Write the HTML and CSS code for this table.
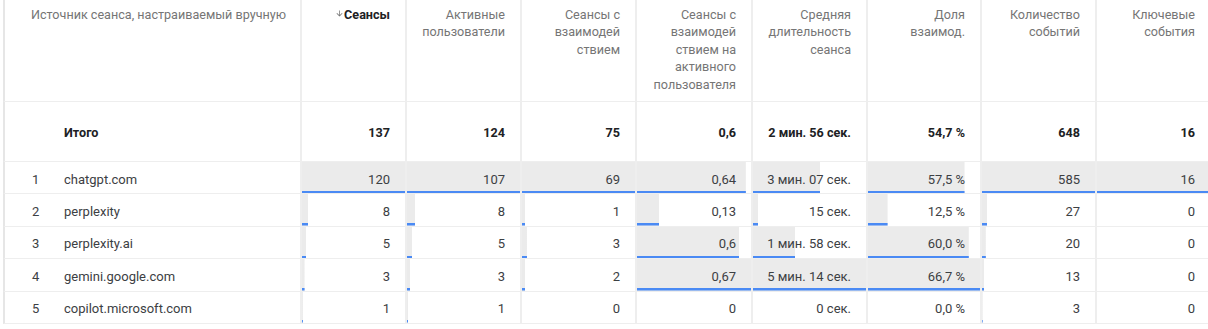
FILE: index.html
```html
<!DOCTYPE html>
<html lang="ru">
<head>
<meta charset="utf-8">
<title>Источники сеансов</title>
<link rel="stylesheet" href="styles.css">
</head>
<body>
<div class="table">
  <div class="row head">
    <div class="c first">Источник сеанса, настраиваемый вручную</div>
    <div class="c sorted"><svg class="arrow" viewBox="0 0 24 24" width="9" height="9"><path d="M20 12l-1.41-1.41L13 16.17V4h-2v12.17l-5.58-5.59L4 12l8 8 8-8z"/></svg>Сеансы</div>
    <div class="c">Активные<br>пользователи</div>
    <div class="c">Сеансы с<br>взаимодей<br>ствием</div>
    <div class="c">Сеансы с<br>взаимодей<br>ствием на<br>активного<br>пользователя</div>
    <div class="c">Средняя<br>длительность<br>сеанса</div>
    <div class="c">Доля<br>взаимод.</div>
    <div class="c">Количество<br>событий</div>
    <div class="c">Ключевые<br>события</div>
  </div>
  <div class="row total">
    <div class="c first"><span class="idx"></span><span class="name">Итого</span></div>
    <div class="c">137</div>
    <div class="c">124</div>
    <div class="c">75</div>
    <div class="c">0,6</div>
    <div class="c">2 мин. 56 сек.</div>
    <div class="c">54,7&nbsp;%</div>
    <div class="c">648</div>
    <div class="c">16</div>
  </div>
  <div class="row data">
    <div class="c first"><span class="idx">1</span><span class="name">chatgpt.com</span></div>
    <div class="c bar" style="--w:100%">120</div>
    <div class="c bar" style="--w:100%">107</div>
    <div class="c bar" style="--w:100%">69</div>
    <div class="c bar" style="--w:95.5%">0,64</div>
    <div class="c bar" style="--w:59.6%">3 мин. 07 сек.</div>
    <div class="c bar" style="--w:86.2%">57,5&nbsp;%</div>
    <div class="c bar" style="--w:100%">585</div>
    <div class="c bar" style="--w:100%">16</div>
  </div>
  <div class="row data">
    <div class="c first"><span class="idx">2</span><span class="name">perplexity</span></div>
    <div class="c bar" style="--w:6.2%">8</div>
    <div class="c bar" style="--w:7.5%">8</div>
    <div class="c bar" style="--w:3%">1</div>
    <div class="c bar" style="--w:19.4%">0,13</div>
    <div class="c bar" style="--w:4.8%">15 сек.</div>
    <div class="c bar" style="--w:17.5%">12,5&nbsp;%</div>
    <div class="c bar" style="--w:4.6%">27</div>
    <div class="c bar" style="--w:0%">0</div>
  </div>
  <div class="row data">
    <div class="c first"><span class="idx">3</span><span class="name">perplexity.ai</span></div>
    <div class="c bar" style="--w:4.2%">5</div>
    <div class="c bar" style="--w:4.7%">5</div>
    <div class="c bar" style="--w:4.4%">3</div>
    <div class="c bar" style="--w:89.6%">0,6</div>
    <div class="c bar" style="--w:37.6%">1 мин. 58 сек.</div>
    <div class="c bar" style="--w:90%">60,0&nbsp;%</div>
    <div class="c bar" style="--w:3.4%">20</div>
    <div class="c bar" style="--w:0%">0</div>
  </div>
  <div class="row data">
    <div class="c first"><span class="idx">4</span><span class="name">gemini.google.com</span></div>
    <div class="c bar" style="--w:2.5%">3</div>
    <div class="c bar" style="--w:2.8%">3</div>
    <div class="c bar" style="--w:2.9%">2</div>
    <div class="c bar" style="--w:100%">0,67</div>
    <div class="c bar" style="--w:100%">5 мин. 14 сек.</div>
    <div class="c bar" style="--w:100%">66,7&nbsp;%</div>
    <div class="c bar" style="--w:2.2%">13</div>
    <div class="c bar" style="--w:0%">0</div>
  </div>
  <div class="row data">
    <div class="c first"><span class="idx">5</span><span class="name">copilot.microsoft.com</span></div>
    <div class="c bar" style="--w:0.9%">1</div>
    <div class="c bar" style="--w:0.9%">1</div>
    <div class="c bar" style="--w:0%">0</div>
    <div class="c bar" style="--w:0%">0</div>
    <div class="c bar" style="--w:0%">0 сек.</div>
    <div class="c bar" style="--w:0%">0,0&nbsp;%</div>
    <div class="c bar" style="--w:0.6%">3</div>
    <div class="c bar" style="--w:0%">0</div>
  </div>
</div>
</body>
</html>
```

FILE: styles.css
```css
html, body {
  margin: 0;
  padding: 0;
  background: #ffffff;
  overflow: hidden;
}

body {
  font-family: Roboto, "Noto Sans", "Liberation Sans", sans-serif;
  font-size: 13px;
  color: #3c4043;
}

.table {
  margin-left: 3px;
  width: 1209px;
}

.row {
  display: grid;
  grid-template-columns: 299px 105px 115px 115px 116px 115px 114px 115px 115px;
}

.c {
  box-sizing: border-box;
  border-right: 2px solid #eeeeee;
  border-bottom: 1px solid #eeeeee;
  padding: 0 15px;
  display: flex;
  justify-content: flex-end;
  align-items: center;
  white-space: nowrap;
  text-align: right;
}

.c.first {
  border-left: 2px solid #e6e6e6;
  justify-content: flex-start;
  text-align: left;
  padding: 0 0 0 27px;
}

/* header */
.head .c {
  height: 102px;
  align-items: flex-start;
  padding-top: 6px;
  font-size: 12.6px;
  line-height: 17.4px;
  color: #757575;
}

.head .c.first {
  justify-content: flex-end;
  padding: 6px 14px 0 0;
}

.head .c.sorted {
  color: #202124;
  font-weight: 700;
  align-items: flex-start;
}

.arrow {
  fill: #757575;
  margin-top: 3px;
  margin-right: 0;
}

/* totals */
.total .c {
  height: 60px;
  font-size: 12.6px;
  font-weight: 700;
  color: #202124;
  padding-top: 1px;
}

/* data rows */
.data .c {
  height: 32.4px;
  padding-top: 3px;
}

.idx {
  display: inline-block;
  width: 32px;
  flex: none;
  text-align: left;
}

.bar {
  background-image: linear-gradient(#4a8af4, #4a8af4), linear-gradient(#ebebeb, #ebebeb);
  background-repeat: no-repeat;
  background-position: left bottom, left top;
  background-size: var(--w) 2.5px, var(--w) 100%;
}
```
